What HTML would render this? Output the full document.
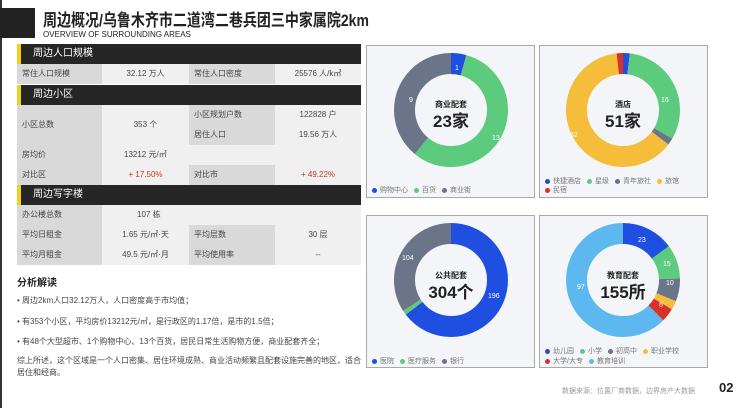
<!DOCTYPE html>
<html><head><meta charset="utf-8"><style>
*{margin:0;padding:0;box-sizing:border-box}
body{width:740px;height:408px;background:#fff;position:relative;overflow:hidden;font-family:"Liberation Sans","Noto Sans CJK SC",sans-serif;color:#333}
.abs{position:absolute}
.hdr{position:absolute;left:17px;width:344px;height:20px;background:#262626;color:#fff;font-size:10px;line-height:20px;padding-left:12px;border-left:4px solid #f2d01e}
.cell{position:absolute;font-size:8px;line-height:20px;color:#444}
.lab{background:#d9d9d9;padding-left:5px}
.val{background:#f0f0f0;text-align:center}
.card{position:absolute;width:169px;height:153px;background:#f4f5f8;border:1px solid #a9a9a9}
.ctr{position:absolute;text-align:center;color:#222;font-weight:bold}
.leg{position:absolute;font-size:7px;color:#777;white-space:nowrap}
.d{display:inline-block;width:5px;height:5px;border-radius:50%;margin:0 3px 0 6px;vertical-align:middle}
.tx{position:absolute;left:17px;font-size:8px;color:#444}
</style></head><body>
<div class="abs" style="left:0;top:0;width:2px;height:408px;background:#333"></div>
<div class="abs" style="left:0;top:8px;width:35px;height:30px;background:#222"></div>
<div class="abs" style="left:43px;top:8px;font-size:14px;font-weight:bold;color:#222;white-space:nowrap;transform:scaleY(1.2);transform-origin:left top">周边概况/乌鲁木齐市二道湾二巷兵团三中家属院2km</div>
<div class="abs" style="left:43px;top:30px;font-size:8px;color:#222">OVERVIEW OF SURROUNDING AREAS</div>

<div class="hdr" style="top:44px">周边人口规模</div>
<div class="cell lab" style="left:17px;top:64px;width:85px">常住人口规模</div>
<div class="cell val" style="left:102px;top:64px;width:87px">32.12 万人</div>
<div class="cell lab" style="left:189px;top:64px;width:86px">常住人口密度</div>
<div class="cell val" style="left:275px;top:64px;width:86px">25576 人/k㎡</div>

<div class="hdr" style="top:85px">周边小区</div>
<div class="cell lab" style="left:17px;top:105px;width:85px;height:40px;line-height:40px">小区总数</div>
<div class="cell val" style="left:102px;top:105px;width:87px;height:40px;line-height:40px">353 个</div>
<div class="cell lab" style="left:189px;top:105px;width:86px">小区规划户数</div>
<div class="cell val" style="left:275px;top:105px;width:86px">122828 户</div>
<div class="cell lab" style="left:189px;top:125px;width:86px">居住人口</div>
<div class="cell val" style="left:275px;top:125px;width:86px">19.56 万人</div>
<div class="cell lab" style="left:17px;top:145px;width:85px">房均价</div>
<div class="cell val" style="left:102px;top:145px;width:259px;text-align:left;padding-left:22px">13212 元/㎡</div>
<div class="cell lab" style="left:17px;top:165px;width:85px">对比区</div>
<div class="cell val" style="left:102px;top:165px;width:87px;color:#c0392b">+ 17.50%</div>
<div class="cell lab" style="left:189px;top:165px;width:86px">对比市</div>
<div class="cell val" style="left:275px;top:165px;width:86px;color:#c0392b">+ 49.22%</div>

<div class="hdr" style="top:185px">周边写字楼</div>
<div class="cell lab" style="left:17px;top:205px;width:85px">办公楼总数</div>
<div class="cell val" style="left:102px;top:205px;width:259px;text-align:left;padding-left:35px">107 栋</div>
<div class="cell lab" style="left:17px;top:225px;width:85px">平均日租金</div>
<div class="cell val" style="left:102px;top:225px;width:87px">1.65 元/㎡·天</div>
<div class="cell lab" style="left:189px;top:225px;width:86px">平均层数</div>
<div class="cell val" style="left:275px;top:225px;width:86px">30 层</div>
<div class="cell lab" style="left:17px;top:245px;width:85px">平均月租金</div>
<div class="cell val" style="left:102px;top:245px;width:87px">49.5 元/㎡·月</div>
<div class="cell lab" style="left:189px;top:245px;width:86px">平均使用率</div>
<div class="cell val" style="left:275px;top:245px;width:86px">--</div>

<div class="tx" style="top:274px;font-size:10px;font-weight:bold;color:#222">分析解读</div>
<div class="tx" style="top:295px">• 周边2km人口32.12万人，人口密度高于市均值；</div>
<div class="tx" style="top:316px">• 有353个小区，平均房价13212元/㎡，是行政区的1.17倍，是市的1.5倍；</div>
<div class="tx" style="top:336px">• 有48个大型超市、1个购物中心、13个百货，居民日常生活购物方便，商业配套齐全；</div>
<div class="tx" style="top:355px;width:345px;line-height:12px">综上所述，这个区域是一个人口密集、居住环境成熟、商业活动频繁且配套设施完善的地区，适合居住和经商。</div>

<div class="card" style="left:366px;top:45px"></div>
<svg class="abs" style="left:366px;top:45px" width="169" height="153">
<g transform="rotate(-90 85 65)" fill="none" stroke-width="21">
<circle cx="85" cy="65" r="46.5" stroke="#1f4fe0" stroke-dasharray="12.7 300" stroke-dashoffset="0"/>
<circle cx="85" cy="65" r="46.5" stroke="#5ccb7e" stroke-dasharray="165.2 300" stroke-dashoffset="-12.7"/>
<circle cx="85" cy="65" r="46.5" stroke="#6b7489" stroke-dasharray="114.3 300" stroke-dashoffset="-177.9"/>
</g>
<g font-size="7" fill="#fff" font-family="Liberation Sans"><text x="89" y="25">1</text><text x="126" y="95">13</text><text x="43" y="57">9</text></g>
</svg>
<div class="ctr" style="left:406px;top:99px;width:90px;font-size:8px">商业配套</div>
<div class="ctr" style="left:406px;top:107px;width:90px;font-size:17px">23家</div>
<div class="leg" style="left:366px;top:185px"><span class="d" style="background:#1f4fe0"></span>购物中心<span class="d" style="background:#5ccb7e"></span>百货<span class="d" style="background:#6b7489"></span>商业街</div>

<div class="card" style="left:539px;top:45px"></div>
<svg class="abs" style="left:539px;top:45px" width="169" height="153">
<g transform="rotate(-90 84 65)" fill="none" stroke-width="21">
<circle cx="84" cy="65" r="46.5" stroke="#1f4fe0" stroke-dasharray="5.7 300"/>
<circle cx="84" cy="65" r="46.5" stroke="#5ccb7e" stroke-dasharray="91.7 300" stroke-dashoffset="-5.7"/>
<circle cx="84" cy="65" r="46.5" stroke="#6b7489" stroke-dasharray="5.7 300" stroke-dashoffset="-97.4"/>
<circle cx="84" cy="65" r="46.5" stroke="#f5bd3a" stroke-dasharray="183.3 300" stroke-dashoffset="-103.1"/>
<circle cx="84" cy="65" r="46.5" stroke="#d9302a" stroke-dasharray="5.7 300" stroke-dashoffset="-286.4"/>
</g>
<g font-size="7" fill="#fff" font-family="Liberation Sans"><text x="122" y="57">16</text><text x="31" y="92">32</text></g>
</svg>
<div class="ctr" style="left:578px;top:99px;width:90px;font-size:8px">酒店</div>
<div class="ctr" style="left:578px;top:107px;width:90px;font-size:17px">51家</div>
<div class="leg" style="left:539px;top:176px"><span class="d" style="background:#2a4bb8"></span>快捷酒店<span class="d" style="background:#6fbf95"></span>星级<span class="d" style="background:#6b7489"></span>青年旅社<span class="d" style="background:#f5bd3a"></span>旅馆</div>
<div class="leg" style="left:539px;top:185px"><span class="d" style="background:#d9302a"></span>民宿</div>

<div class="card" style="left:366px;top:215px"></div>
<svg class="abs" style="left:366px;top:215px" width="169" height="153">
<g transform="rotate(-90 85 65)" fill="none" stroke-width="21">
<circle cx="85" cy="65" r="46.5" stroke="#1f4fe0" stroke-dasharray="188.4 300"/>
<circle cx="85" cy="65" r="46.5" stroke="#5ccb7e" stroke-dasharray="3.8 300" stroke-dashoffset="-188.4"/>
<circle cx="85" cy="65" r="46.5" stroke="#6b7489" stroke-dasharray="100 300" stroke-dashoffset="-192.2"/>
</g>
<g font-size="7" fill="#fff" font-family="Liberation Sans"><text x="122" y="83">196</text><text x="36" y="45">104</text></g>
</svg>
<div class="ctr" style="left:406px;top:270px;width:90px;font-size:8px">公共配套</div>
<div class="ctr" style="left:406px;top:278px;width:90px;font-size:17px">304个</div>
<div class="leg" style="left:366px;top:356px"><span class="d" style="background:#1f4fe0"></span>医院<span class="d" style="background:#5ccb7e"></span>医疗服务<span class="d" style="background:#6b7489"></span>银行</div>

<div class="card" style="left:539px;top:215px"></div>
<svg class="abs" style="left:539px;top:215px" width="169" height="153">
<g transform="rotate(-90 84 65)" fill="none" stroke-width="21">
<circle cx="84" cy="65" r="46.5" stroke="#1f4fe0" stroke-dasharray="43.4 300"/>
<circle cx="84" cy="65" r="46.5" stroke="#5ccb7e" stroke-dasharray="28.3 300" stroke-dashoffset="-43.4"/>
<circle cx="84" cy="65" r="46.5" stroke="#6b7489" stroke-dasharray="18.9 300" stroke-dashoffset="-71.7"/>
<circle cx="84" cy="65" r="46.5" stroke="#f5bd3a" stroke-dasharray="7.5 300" stroke-dashoffset="-90.6"/>
<circle cx="84" cy="65" r="46.5" stroke="#d9302a" stroke-dasharray="11.3 300" stroke-dashoffset="-98.1"/>
<circle cx="84" cy="65" r="46.5" stroke="#5db8ef" stroke-dasharray="182.8 300" stroke-dashoffset="-109.4"/>
</g>
<g font-size="7" fill="#fff" font-family="Liberation Sans"><text x="99" y="27">23</text><text x="124" y="51">15</text><text x="127" y="70">10</text><text x="120" y="92">6</text><text x="38" y="74">97</text></g>
</svg>
<div class="ctr" style="left:578px;top:270px;width:90px;font-size:8px">教育配套</div>
<div class="ctr" style="left:578px;top:278px;width:90px;font-size:17px">155所</div>
<div class="leg" style="left:539px;top:346px"><span class="d" style="background:#2a4bb8"></span>幼儿园<span class="d" style="background:#5ccb7e"></span>小学<span class="d" style="background:#6b7489"></span>初高中<span class="d" style="background:#f5bd3a"></span>职业学校</div>
<div class="leg" style="left:539px;top:356px"><span class="d" style="background:#d9302a"></span>大学/大专<span class="d" style="background:#5db8ef"></span>教育培训</div>

<div class="abs" style="left:562px;top:386px;font-size:7px;color:#999;white-space:nowrap">数据来源：位置厂商数据，边界房产大数据</div>
<div class="abs" style="left:719px;top:380px;font-size:13px;font-weight:bold;color:#222">02</div>
</body></html>
